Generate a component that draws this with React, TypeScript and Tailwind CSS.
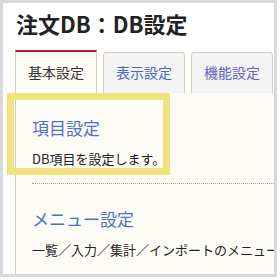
import React from 'react'

const tabs = [
  { label: '基本設定', active: true, color: 'text-[#333333]' },
  { label: '表示設定', active: false, color: 'text-[#4a66cc]' },
  { label: '機能設定', active: false, color: 'text-[#6464c4]' },
]

const items = [
  { title: '項目設定', desc: 'DB項目を設定します。' },
  { title: 'メニュー設定', desc: '一覧／入力／集計／インポートのメニューを設定します。' },
]

export default function App() {
  return (
    <div
      className="relative w-[277px] h-[277px] border-[3px] border-[#d9d9d9] bg-white overflow-hidden flex flex-col"
      style={{ fontFamily: '"Noto Sans CJK JP", "Noto Sans", sans-serif' }}
    >
      <h1 className="pl-[13px] pt-[5px] text-[22px] leading-[30px] font-bold text-[#222222]">
        注文DB：DB設定
      </h1>

      {/* Tabs */}
      <div className="mt-[12px] pl-[12px] flex items-end gap-[6px] h-[43px]">
        {tabs.map(t =>
          t.active ? (
            <div
              key={t.label}
              className="w-[82px] h-[43px] border-x border-[#d6ceb4] border-t-2 border-t-[#b01e1e] bg-[#fffcf3] flex items-center justify-center text-[14px] text-[#333333]"
            >
              {t.label}
            </div>
          ) : (
            <div
              key={t.label}
              className={`w-[82px] h-[41px] border border-b-0 border-[#d6ceb4] rounded-t-[4px] bg-[#f4f4f4] flex items-center justify-center pb-[1px] text-[14px] ${t.color}`}
            >
              {t.label}
            </div>
          )
        )}
      </div>

      {/* Panel */}
      <div className="ml-[12px] flex-1 border-l border-[#d6ceb4] bg-[#fdfcf7] overflow-hidden">
        {items.map(it => (
          <div key={it.title} className="ml-[16px] pt-[23px] pb-[15px] border-b border-dotted border-[#a8a8a8]">
            <div className="text-[17px] leading-[24px] text-[#4a70cc]">{it.title}</div>
            <div className="mt-[10px] text-[13px] leading-[18px] text-[#222222] whitespace-nowrap">{it.desc}</div>
          </div>
        ))}
      </div>

      {/* Highlight annotation */}
      <div className="absolute left-[4px] top-[90px] w-[163px] h-[82px] border-[7px] border-[#f0e27c]" />
    </div>
  )
}
